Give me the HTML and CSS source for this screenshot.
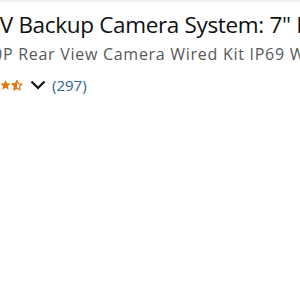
FILE: index.html
```html
<!DOCTYPE html>
<html>
<head>
<meta charset="utf-8">
<link rel="stylesheet" href="styles.css">
</head>
<body>
<div class="page">
  <h1 class="title">RV Backup Camera System: 7" HD Monitor</h1>
  <p class="subtitle">1080P Rear View Camera Wired Kit IP69 Waterproof</p>
  <div class="rating">
    <span class="stars">
      <svg width="11" height="12" viewBox="0 0 24 24"><path d="M12 1l3.3 7.2 7.9.8-5.9 5.3 1.7 7.8L12 18l-7 4.1 1.7-7.8L.8 9l7.9-.8z" fill="#e47911"/></svg>
      <svg width="12" height="12" viewBox="0 0 24 24"><defs><clipPath id="h"><rect x="0" y="0" width="12" height="24"/></clipPath></defs><path d="M12 2.8l3 6.5 7 .8-5.3 4.8 1.5 7L12 18.3l-6.2 3.6 1.5-7L2 10.1l7-.8z" fill="none" stroke="#e47911" stroke-width="2.4" stroke-linejoin="round"/><path d="M12 1l3.3 7.2 7.9.8-5.9 5.3 1.7 7.8L12 18l-7 4.1 1.7-7.8L.8 9l7.9-.8z" fill="#e47911" clip-path="url(#h)"/></svg>
    </span>
    <svg class="chev" width="16" height="10" viewBox="0 0 16 10"><path d="M1.5 1.5L8 8l6.5-6.5" fill="none" stroke="#0f1111" stroke-width="2.2"/></svg>
    <a class="count">(297)</a>
  </div>
</div>
</body>
</html>
```

FILE: styles.css
```css
html, body {
  margin: 0;
  padding: 0;
  background: #fff;
}
.page {
  border-top: 2px solid #f0f0f0;
  width: 300px;
  height: 298px;
  overflow: hidden;
  font-family: "Open Sans", "Noto Sans", sans-serif;
}
.title {
  margin: 0;
  padding-top: 8px;
  font-size: 22.5px;
  line-height: 30px;
  font-weight: 400;
  color: #0f1111;
  white-space: nowrap;
  letter-spacing: -0.33px;
  text-indent: -13.75px;
}
.subtitle {
  margin: 0;
  padding-top: 3px;
  font-size: 16px;
  line-height: 22px;
  color: #565959;
  white-space: nowrap;
  letter-spacing: 0.72px;
  text-indent: -36.5px;
}
.rating {
  display: flex;
  align-items: center;
  height: 22px;
  margin-top: 9px;
}
.stars {
  display: flex;
}
.stars svg { display: block; }
.chev {
  display: block;
  margin-left: 7px;
}
.count {
  margin-left: 6px;
  font-size: 15px;
  color: #2a6496;
}
```
